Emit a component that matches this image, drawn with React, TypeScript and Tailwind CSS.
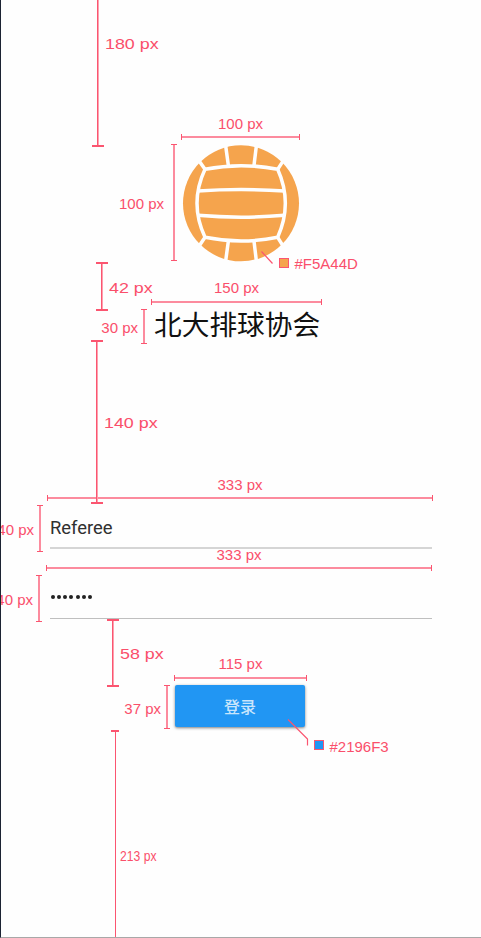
import React from "react";
import type { ReactNode } from "react";

function Label({ children, className = "" }: { children: string; className?: string }) {
  return <span className={`shrink-0 whitespace-nowrap text-[15px] leading-[18px] text-[#fa4f6b] ${className}`}>{children}</span>;
}

type FrameProps = {
  width: string;
  height: string;
  /* grid columns: gutter for the height mark, then the measured item */
  columns: string;
  head?: string;
  row: string;
  item: string;
  gap?: string;
  className?: string;
  children: ReactNode;
};

/* An element with its width written above it and its height at its left. */
function Measured({ width, height, columns, head = "h-[25px]", row, item, gap = "gap-[3px]", className = "", children }: FrameProps) {
  return (
    <section className={`grid gap-y-1 ${columns} ${className}`}>
      <div className={`col-start-2 flex flex-col items-center justify-between ${head}`}>
        <Label>{width}</Label>
        <div className="flex h-[6px] w-full items-center border-x border-[#fb5570]">
          <div className="h-[2px] w-full bg-[#fc8b9e]" />
        </div>
      </div>
      <div className={`col-start-1 flex items-center justify-end pr-1 ${row} ${gap}`}>
        <Label className="mt-[3px]">{height}</Label>
        <div className="flex h-full w-[6px] shrink-0 justify-center border-y border-[#fb5570]">
          <div className="h-full w-[2px] bg-[#fc8b9e]" />
        </div>
      </div>
      <div className={`col-start-2 flex ${row} ${item}`}>{children}</div>
    </section>
  );
}

/* A distance mark laid over the screen. */
function Distance({ place, caps = "border-y-2", label = "mt-[2px]", children }: { place: string; caps?: string; label?: string; children: string }) {
  return (
    <div className={`absolute flex items-center gap-px ${place}`}>
      <div className={`flex h-full w-3 shrink-0 justify-center border-[#fb5570] ${caps}`}>
        <div className="h-full w-[2px] border-l border-[#fb5570] bg-[#fda0af]" />
      </div>
      <Label className={`origin-left scale-x-[1.19] ${label}`}>{children}</Label>
    </div>
  );
}

function Volleyball() {
  return (
    <svg viewBox="51 105 354 354" className="block size-[118px] shrink-0" fill="none" aria-hidden="true">
      <circle cx="228" cy="280" r="174" fill="#f5a44d" />
      <g stroke="#fefefe" strokeWidth="10.5">
        <path d="M120 178Q228 156 338 178Q384 280 338 382Q228 404 120 382Q72 280 120 178Z" />
        <path d="M98 243Q228 234 359 243M98 316Q228 327 359 316" />
        <path d="M102 152L120 178M355 152L338 178M102 409L120 382M355 409L338 382" />
        <path d="M181 100L190 166M275 100L267 166M190 394L181 460M267 394L275 460" />
      </g>
    </svg>
  );
}

export default function App() {
  return (
    <div className="relative h-[938px] w-[481px] overflow-hidden border-b border-l border-b-[#a8a8a8] border-l-[#1c2333] bg-[#fefefe] font-['Liberation_Sans','Noto_Sans_CJK_SC',sans-serif]">
      <main className="flex flex-col pt-[115px]">
        <Measured width="100 px" height="100 px" columns="grid-cols-[180px_119px]" row="h-[117px]" item="pt-px pl-px" gap="gap-[7px]">
          <Volleyball />
        </Measured>

        <Measured width="150 px" height="30 px" columns="grid-cols-[150px_171px]" head="h-[26px]" row="h-[35px]" item="items-center pb-[7px] pl-[3px]" className="mt-[18px]">
          <h1 className="font-['Noto_Sans_CJK_SC',sans-serif] text-[27.7px] leading-[30px] whitespace-nowrap text-[#111]">北大排球协会</h1>
        </Measured>

        <Measured width="333 px" height="40 px" columns="grid-cols-[46px_386px]" row="h-[47px]" item="pr-px pb-[3px] pl-[3px]" className="mt-[132px]">
          <div className="flex w-full items-center border-b-2 border-[#d5d5d5] pt-[3px] font-['Roboto',sans-serif] text-[18.4px] text-[#303030]">Referee</div>
        </Measured>

        <Measured width="333 px" height="40 px" columns="grid-cols-[45px_386px]" row="h-[47px]" item="pb-[3px] pl-1" className="-mt-[6px]">
          <div className="flex w-full items-center gap-[2.3px] border-b border-[#bfbfbf] pt-px pl-[0.5px]">
            {[0, 1, 2, 3, 4, 5, 6].map((n) => (
              <span key={n} className="size-[4px] rounded-full bg-[#222]" />
            ))}
          </div>
        </Measured>

        <Measured width="115 px" height="37 px" columns="grid-cols-[173px_133px]" head="h-[26px]" row="h-[44px]" item="pr-[2px] pb-[2px] pl-px" className="mt-[33px]">
          <button className="w-full rounded-[2px] bg-[#2196f3] font-['Noto_Sans_CJK_SC',sans-serif] text-[16px] leading-[20px] font-medium text-[#c9e5fc] shadow-[0_1px_3px_rgba(0,0,0,0.5)]">
            登录
          </button>
        </Measured>
      </main>

      <Distance place="top-0 left-[91px] h-[147px]" caps="border-b-2" label="-mt-[59px]">180 px</Distance>
      <Distance place="top-[262px] left-[95px] h-[49px]">42 px</Distance>
      <Distance place="top-[340px] left-[90px] h-[164px]">140 px</Distance>
      <Distance place="top-[619px] left-[106px] h-[68px]">58 px</Distance>
      <div className="absolute top-[730px] left-[110px] flex h-[208px] items-center gap-px">
        <div className="flex h-full w-2 justify-center border-t-2 border-[#fb5570]">
          <div className="h-full w-px bg-[#fb5570]" />
        </div>
        <Label className="mt-[44px] origin-left scale-x-[0.81]">213 px</Label>
      </div>

      <svg className="absolute inset-0 size-full" fill="none" stroke="#fb5570" strokeWidth="1.2" aria-hidden="true">
        <path d="M260.5 251.5L271.5 263.5M287 719.5L306.5 739V745.5" />
      </svg>
      <div className="absolute top-[255px] left-[278px] flex items-center gap-[5.5px]">
        <i className="mb-[3px] size-[10px] border border-[#fb5570] bg-[#f5a44d]" />
        <Label>#F5A44D</Label>
      </div>
      <div className="absolute top-[738px] left-[313px] flex items-center gap-[5.5px]">
        <i className="mb-[4px] size-[10px] border border-[#fb5570] bg-[#2196f3]" />
        <Label>#2196F3</Label>
      </div>
    </div>
  );
}
